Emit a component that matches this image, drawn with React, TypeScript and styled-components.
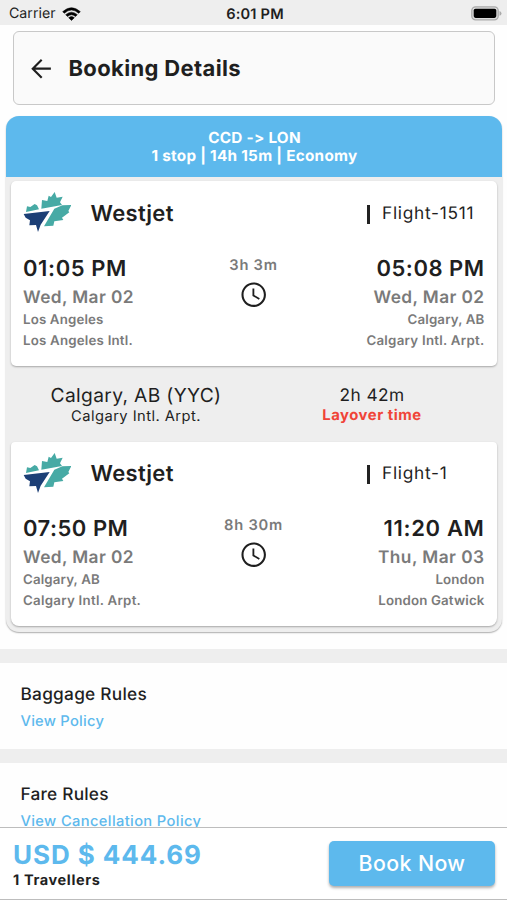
import React from 'react';
import styled, { createGlobalStyle } from 'styled-components';

const BLUE = '#5db9ed';
const INK = '#1f1f1f';
const GREY = '#7a7a7a';

const GlobalStyle = createGlobalStyle`
  * { box-sizing: border-box; }
  body { margin: 0; background: #fff; font-family: Inter, "Liberation Sans", sans-serif; color: ${INK}; }
`;

const Screen = styled.main`
  width: 507px;
  height: 900px;
  display: flex;
  flex-direction: column;
  overflow: hidden;
  background: #fefefe;
  text-rendering: geometricPrecision;
`;

const Text = styled.div<{ $size: number; $lh: number; $weight?: number; $ls?: number; $color?: string }>`
  font-size: ${p => p.$size}px;
  line-height: ${p => p.$lh}px;
  font-weight: ${p => p.$weight ?? 600};
  letter-spacing: ${p => p.$ls ?? 0}px;
  color: ${p => p.$color ?? INK};
  white-space: nowrap;
`;

const StatusBar = styled.header`
  flex: none;
  height: 25px;
  padding: 2px 6px 0 9px;
  display: grid;
  grid-template-columns: 1fr auto 1fr;
  align-items: center;
  background: #eeeeee;
`;

const Carrier = styled.div`
  display: flex;
  align-items: center;
  gap: 6px;
`;

const BatterySlot = styled.div`
  display: flex;
  justify-content: flex-end;
  padding-bottom: 1px;
  margin-right: -1px;
`;

const TitleBar = styled.div`
  flex: none;
  height: 74px;
  margin: 6px 12px 0 13px;
  padding: 1px 0 0 13px;
  display: flex;
  align-items: center;
  gap: 12px;
  border: 1.5px solid #c8c8c8;
  border-radius: 6px;
  background: #fafafa;
`;

const Trip = styled.section`
  flex: none;
  height: 515.5px;
  margin: 11px 5px 0 6px;
  border-radius: 13px;
  overflow: hidden;
  background: #eeeeee;
  box-shadow: 0 1px 1.5px rgba(0, 0, 0, 0.32);
`;

const TripHeader = styled.div`
  height: 61px;
  padding: 12.5px 0 0 1px;
  text-align: center;
  background: ${BLUE};
`;

const FlightCard = styled.article<{ $first?: boolean }>`
  height: ${p => (p.$first ? 185 : 184)}px;
  margin: ${p => (p.$first ? '4px' : '0')} 5px 0 4.5px;
  padding: 9.5px 13px 0 12.5px;
  border-radius: ${p => (p.$first ? '5px' : '4px 4px 8px 8px')};
  background: #fff;
  box-shadow: 0 1px 2px rgba(0, 0, 0, 0.3);
`;

const Airline = styled.div`
  display: grid;
  grid-template-columns: 67.5px 276px 15.5px auto;
  justify-content: start;
  align-items: center;
  height: 46px;
`;

const LogoSlot = styled.div`
  display: flex;
  padding-bottom: 3px;
`;

const Divider = styled.span`
  width: 3px;
  height: 19px;
  margin-top: 1px;
  background: #222;
`;

const Schedule = styled.div`
  display: grid;
  grid-template-columns: 1fr auto 1fr;
  padding-top: 18px;
`;

const Stop = styled.div<{ $end?: boolean }>`
  text-align: ${p => (p.$end ? 'right' : 'left')};
  margin-right: ${p => (p.$end ? '-0.5px' : '0')};
`;

const Duration = styled.div`
  display: flex;
  flex-direction: column;
  align-items: center;
  gap: 5px;
`;

const Layover = styled.div`
  height: 75.5px;
  padding: 17px 0 0 16px;
  display: grid;
  grid-template-columns: 228px 244px;
  text-align: center;
`;

const RuleSections = styled.div`
  flex: none;
  height: 178.5px;
  margin-top: 17px;
  overflow: hidden;
`;

const Rules = styled.section`
  height: 100px;
  padding: 20px 20.5px 0;
  border-top: 14.5px solid #eeeeee;
`;

const Footer = styled.footer`
  flex: none;
  height: 73px;
  padding: 0 12px 0 13px;
  display: flex;
  justify-content: space-between;
  align-items: flex-start;
  border-top: 1.5px solid #bdbdbd;
  border-bottom: 1px solid #bdbdbd;
  background: #fff;
`;

const Price = styled.div`
  padding-top: 12px;
`;

const BookButton = styled.button`
  width: 166px;
  height: 45px;
  margin-top: 13px;
  padding: 0;
  border: 0;
  border-radius: 5px;
  background: ${BLUE};
  color: #fff;
  font: 500 21.3px/45px Inter, sans-serif;
  letter-spacing: 0.4px;
  box-shadow: 0 2px 3px rgba(0, 0, 0, 0.32);
`;

const WifiIcon = () => (
  <svg width="19" height="14" viewBox="0 0 57 42">
    <path d="M2 14Q28.500-10 55 14l-5 5Q28.500-1 7 19zM11 23q17.500-15 35 0l-5.500 5.500q-12-10-24 0zM20 32q8.500-7 17 0l-8.500 8.500z" fill="#000" stroke="#000" strokeWidth="1.500" />
  </svg>
);

const BatteryIcon = () => (
  <svg width="31" height="15" viewBox="0 0 31 15">
    <rect x="0.800" y="0.800" width="26.400" height="13" rx="3.800" fill="#ddd" stroke="#aaa" strokeWidth="1.300" />
    <rect x="2.700" y="2.700" width="22.600" height="9.200" rx="1.800" fill="#000" />
    <path d="M28.500 5q2 .8 2 2.400t-2 2.400z" fill="#aaa" />
  </svg>
);

const BackIcon = () => (
  <svg width="29.400" height="29.400" viewBox="0 0 24 24">
    <path d="M19.500 12H5M12 4.700L4.700 12l7.300 7.300" fill="none" stroke={INK} strokeWidth="1.750" />
  </svg>
);

const ClockIcon = () => (
  <svg width="29.400" height="29.400" viewBox="0 0 24 24">
    <path d="M11.990 2C6.470 2 2 6.480 2 12s4.470 10 9.990 10C17.520 22 22 17.520 22 12S17.520 2 11.990 2zM12 20.300c-4.580 0-8.300-3.720-8.300-8.300s3.720-8.300 8.300-8.300 8.300 3.720 8.300 8.300-3.720 8.300-8.300 8.300zm.5-13.300H11v6l5.250 3.150.75-1.230-4.500-2.670z" fill={INK} />
  </svg>
);

const LeafLogo = () => (
  <svg width="48" height="42" viewBox="69 34 144 126">
    <path d="M124 87l2-26 16 3 4-16 7 4 11-15 6 17 18-3-8 17 6 8zM78 97l3-17 10 2 13-9 7 4 6 12zM163 87l24-10 27-1-9 18 3 4-22 16 4 7-27 4-3 13-28 2z" fill="#47aaa5" />
    <path d="M71 103l78-9-27 41-8 22-6-21-20 1 2-15-13-8z" fill="#1c3f76" />
  </svg>
);

type Place = { time: string; tls: number; date: string; dls: number; city: string; airport: string; als: number };
type FlightData = { number: string; duration: string; from: Place; to: Place };

const flights: FlightData[] = [
  {
    number: 'Flight-1511',
    duration: '3h 3m',
    from: { time: '01:05 PM', tls: 0.6, date: 'Wed, Mar 02', dls: 0.4, city: 'Los Angeles', airport: 'Los Angeles Intl.', als: 0.2 },
    to: { time: '05:08 PM', tls: 0.5, date: 'Wed, Mar 02', dls: 0.4, city: 'Calgary, AB', airport: 'Calgary Intl. Arpt.', als: 0.26 },
  },
  {
    number: 'Flight-1',
    duration: '8h 30m',
    from: { time: '07:50 PM', tls: 0.5, date: 'Wed, Mar 02', dls: 0.4, city: 'Calgary, AB', airport: 'Calgary Intl. Arpt.', als: 0.26 },
    to: { time: '11:20 AM', tls: 0.65, date: 'Thu, Mar 03', dls: 0.45, city: 'London', airport: 'London Gatwick', als: 0.15 },
  },
];

const PlaceInfo = ({ place, end }: { place: Place; end?: boolean }) => (
  <Stop $end={end}>
    <Text $size={22} $lh={28} $ls={place.tls}>{place.time}</Text>
    <Text $size={17.3} $lh={29} $ls={place.dls} $color={GREY}>{place.date}</Text>
    <Text $size={13.3} $lh={16} $ls={0.14} $color={GREY}>{place.city}</Text>
    <Text $size={13.3} $lh={26} $ls={place.als} $color={GREY}>{place.airport}</Text>
  </Stop>
);

const Flight = ({ flight, first }: { flight: FlightData; first?: boolean }) => (
  <FlightCard $first={first}>
    <Airline>
      <LogoSlot><LeafLogo /></LogoSlot>
      <Text $size={22} $lh={30} $ls={0.35}>Westjet</Text>
      <Divider />
      <Text $size={17.3} $lh={30} $weight={440} $ls={0.72}>{flight.number}</Text>
    </Airline>
    <Schedule>
      <PlaceInfo place={flight.from} />
      <Duration>
        <Text $size={14.7} $lh={20} $ls={0.75} $color={GREY}>{flight.duration}</Text>
        <ClockIcon />
      </Duration>
      <PlaceInfo place={flight.to} end />
    </Schedule>
  </FlightCard>
);

export default function App() {
  return (
    <>
      <GlobalStyle />
      <Screen>
        <StatusBar>
          <Carrier>
            <Text $size={14.2} $lh={24} $weight={420}>Carrier</Text>
            <WifiIcon />
          </Carrier>
          <Text $size={14.6} $lh={24} $ls={0.2}>6:01 PM</Text>
          <BatterySlot><BatteryIcon /></BatterySlot>
        </StatusBar>
        <TitleBar>
          <BackIcon />
          <Text $size={22} $lh={30} $weight={650} $ls={0.36}>Booking Details</Text>
        </TitleBar>
        <Trip>
          <TripHeader>
            <Text $size={15.3} $lh={18.5} $weight={700} $ls={0.25} $color="#fff">CCD -&gt; LON</Text>
            <Text $size={15.3} $lh={18.5} $weight={700} $ls={0.27} $color="#fff">1 stop | 14h 15m | Economy</Text>
          </TripHeader>
          <Flight flight={flights[0]} first />
          <Layover>
            <div>
              <Text $size={19.2} $lh={24} $weight={440} $ls={0.35}>Calgary, AB (YYC)</Text>
              <Text $size={14.7} $lh={18} $weight={440} $ls={0.45}>Calgary Intl. Arpt.</Text>
            </div>
            <div>
              <Text $size={17.3} $lh={26} $weight={440} $ls={0.4}>2h 42m</Text>
              <Text $size={14.8} $lh={13} $weight={650} $ls={0.55} $color="#f04438">Layover time</Text>
            </div>
          </Layover>
          <Flight flight={flights[1]} />
        </Trip>
        <RuleSections>
          <Rules>
            <Text $size={17.3} $lh={24} $weight={500} $ls={0.25}>Baggage Rules</Text>
            <Text $size={14.7} $lh={29} $weight={500} $ls={0.25} $color={BLUE}>View Policy</Text>
          </Rules>
          <Rules>
            <Text $size={17.3} $lh={24} $weight={500} $ls={0.2}>Fare Rules</Text>
            <Text $size={14.7} $lh={29} $weight={500} $ls={0.37} $color={BLUE}>View Cancellation Policy</Text>
          </Rules>
        </RuleSections>
        <Footer>
          <Price>
            <Text $size={26} $lh={32} $weight={650} $ls={0.93} $color={BLUE}>USD $ 444.69</Text>
            <Text $size={14.5} $lh={18} $weight={650} $ls={0.62}>1 Travellers</Text>
          </Price>
          <BookButton>Book Now</BookButton>
        </Footer>
      </Screen>
    </>
  );
}
